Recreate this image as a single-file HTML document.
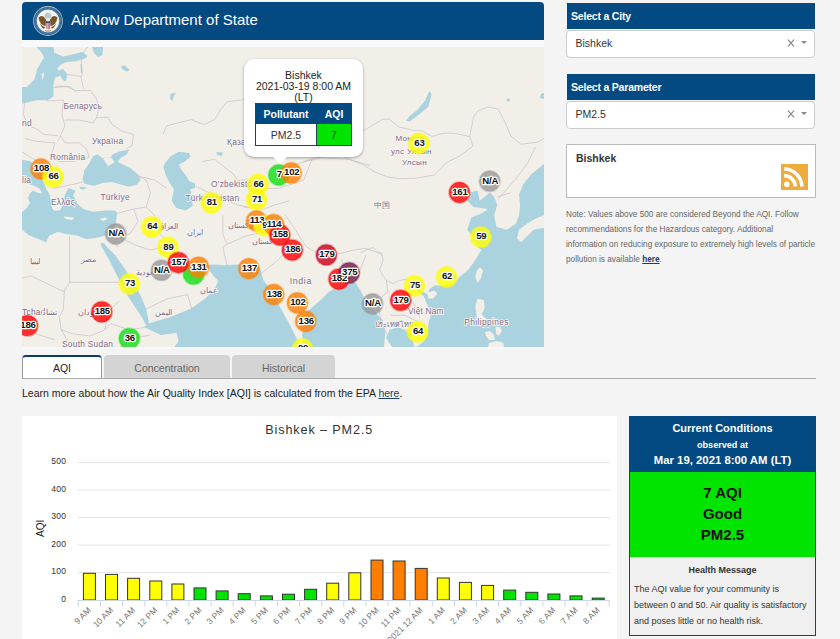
<!DOCTYPE html>
<html><head><meta charset="utf-8">
<style>
*{margin:0;padding:0;box-sizing:border-box}
html,body{width:840px;height:639px;overflow:hidden;background:#f4f4f4;font-family:"Liberation Sans",sans-serif;color:#333;position:relative}
.abs{position:absolute}
#hdr{left:22px;top:2px;width:522px;height:38px;background:#034a83;border-radius:4px 4px 0 0}
#hdr .t{position:absolute;left:49px;top:9px;font-size:15px;color:#fff;white-space:nowrap}
#map{left:22px;top:47px;width:522px;height:300px;background:#f2efe9;overflow:hidden}
.sh{left:567px;width:248px;height:26px;background:#034a83;color:#fff;font-weight:bold;font-size:10.5px;padding:7px 0 0 4px;letter-spacing:-0.2px}
.sel{left:566px;width:249px;height:28px;background:#fff;border:1px solid #ccc;border-radius:4px;font-size:10.5px;padding:6px 0 0 8.5px;color:#333}
.sel .x{position:absolute;left:220px;top:7.5px}
.sel .c{position:absolute;left:233.5px;top:10px;width:0;height:0;border-left:3.3px solid transparent;border-right:3.3px solid transparent;border-top:3.3px solid #888}
#city{left:566px;top:144px;width:250px;height:54px;background:#fff;border:1px solid #bbb}
#city .n{position:absolute;left:9px;top:7px;font-weight:bold;font-size:10.5px;color:#333}
#rss{left:781px;top:164px;width:27px;height:26px;background:#efac3c}
#note{left:566px;top:207.2px;width:270px;white-space:nowrap;font-size:8.25px;line-height:15px;color:#666}
#note a{color:#1a3d6b;font-weight:bold;text-decoration:underline}
.tab{top:355px;height:24px;font-size:10.5px;text-align:center;padding-top:5px;border-radius:4px 4px 0 0}
#t1{left:22px;width:80px;background:#fff;border:1px solid #999;border-top:2px solid #0c3c6a;border-bottom:none;color:#222}
#t2{left:104px;width:126px;background:#d4d4d4;color:#666;padding-top:7px}
#t3{left:232px;width:103px;background:#d4d4d4;color:#666;padding-top:7px}
#tline{left:22px;top:378px;width:794px;height:1px;background:#a8a8a8}
#learn{left:22px;top:387px;font-size:10.5px;color:#222;white-space:nowrap}
#learn a{color:#1a3d6b;text-decoration:underline}
#chart{left:22px;top:416px;width:595px;height:223px;background:#fff}
#cc{left:629px;top:416px;width:187px;height:220px;background:#f0f0f0;border:1px solid #034a83}
#cch{position:absolute;left:0;top:0;width:185px;height:55px;background:#034a83;color:#fff;font-weight:bold;text-align:center}
#ccg{position:absolute;left:0;top:55px;width:185px;height:85px;background:#00e400;color:#111;font-weight:bold;text-align:center;font-size:15px;line-height:21px;padding-top:10px}
#cchm{position:absolute;left:0;top:140px;width:185px;text-align:center;font-weight:bold;font-size:9px;color:#333;padding-top:8px}
#ccb{position:absolute;left:4px;top:164px;width:180px;font-size:9px;line-height:16px;color:#333}

#pop{position:absolute;left:222px;top:12px;width:119px;height:98px;background:#fff;border-radius:10px;box-shadow:0 1px 3px rgba(0,0,0,0.35)}
#pop .pt{position:absolute;left:0;top:11px;width:119px;text-align:center;font-size:10.5px;line-height:11px;color:#222}
#pop table{position:absolute;left:11px;top:44px;width:97px;border-collapse:collapse;font-size:10.5px}
#pop th{background:#034a83;color:#fff;height:20px;font-weight:bold;border:1px solid #034a83}
#pop td{height:22px;text-align:center;border:1px solid #1f3d5c;color:#333}
#pop .c1{width:61px}
#pop .g{background:#00e400}
#pop .tip{position:absolute;left:28.2px;top:97px;width:0;height:0;border-left:8.5px solid transparent;border-right:8.5px solid transparent;border-top:8px solid #fff}
</style></head><body>
<div id="hdr" class="abs">
<svg style="position:absolute;left:11px;top:4px" width="30" height="30" viewBox="0 0 30 30">
<circle cx="15" cy="15" r="14.9" fill="#a9c6c0"/>
<circle cx="15" cy="15" r="14.1" fill="#2c5f96"/>
<circle cx="15" cy="15" r="12.6" fill="none" stroke="#5b86b0" stroke-width="1.6" stroke-dasharray="0.8 0.6"/>
<circle cx="15" cy="15" r="11.4" fill="#cfe0d8"/>
<circle cx="15" cy="15" r="10.8" fill="#f7f6f0"/>
<ellipse cx="15" cy="9.8" rx="3.4" ry="3" fill="#b8c8d2"/>
<path d="M5.5 11.5 Q8 9 10.5 10.5 Q12.5 12 13.5 15 L13.2 20 Q10 20 8 17.5 Q6 15 5.5 11.5Z" fill="#7a5526"/>
<path d="M24.5 11.5 Q22 9 19.5 10.5 Q17.5 12 16.5 15 L16.8 20 Q20 20 22 17.5 Q24 15 24.5 11.5Z" fill="#7a5526"/>
<path d="M7 17 Q9 20.5 12 21 L11 23 Q8 21.5 7 17Z" fill="#5f6a3a"/>
<path d="M23 17 Q21 20.5 18 21 L19 23 Q22 21.5 23 17Z" fill="#8a6a3a"/>
<circle cx="15" cy="13.3" r="1.4" fill="#eee"/>
<path d="M12.7 15.2 H17.3 V20 Q17.3 23 15 24 Q12.7 23 12.7 20Z" fill="#e6e6ea"/>
<rect x="12.7" y="15.2" width="4.6" height="2" fill="#3b4f8a"/>
<rect x="13.4" y="17.2" width="0.8" height="5.5" fill="#c0504d"/>
<rect x="14.8" y="17.2" width="0.8" height="6.3" fill="#c0504d"/>
<rect x="16.2" y="17.2" width="0.8" height="5.5" fill="#c0504d"/>
<path d="M12 24.5 Q15 26 18 24.5" stroke="#9a8a6a" stroke-width="1" fill="none"/>
</svg>
<div class="t">AirNow Department of State</div>
</div>
<div class="abs" style="left:22px;top:40px;width:522px;height:7px;background:#f8f9fa"></div>
<div class="abs" style="left:22px;top:347px;width:522px;height:2px;background:#f7f8fa"></div>
<div id="map" class="abs"><svg width="522" height="300" viewBox="22 47 522 300" style="position:absolute;left:0;top:0">
<rect x="22" y="47" width="522" height="300" fill="#f2efe9"/>
<polygon points="36.3,47.0 53.4,47.0 54.4,52.7 63.0,56.5 75.3,53.7 83.0,51.8 87.7,56.5 83.0,59.4 75.3,61.3 65.8,62.2 60.1,65.1 58.2,70.8 63.0,68.9 67.7,74.6 65.8,81.3 63.0,80.3 60.1,75.6 55.3,77.5 53.4,85.1 53.4,96.5 47.7,100.3 36.3,100.3 27.7,102.2 22.0,104.1 22.0,87.0 26.8,87.0 34.4,79.4 37.2,68.9 43.9,57.5 41.0,51.8" fill="#aad3df"/>
<polygon points="92.0,47.0 103.0,47.0 102.5,55.0 98.0,56.9 94.0,53.0" fill="#aad3df"/>
<polygon points="121.4,66.0 125.0,65.6 129.7,70.0 127.0,71.8 122.0,69.0" fill="#aad3df"/>
<polygon points="80.5,64.0 82.0,64.0 82.5,72.0 81.0,73.0" fill="#aad3df"/>
<polygon points="82.4,180.0 84.3,170.5 89.0,163.8 92.9,156.2 97.6,154.3 102.4,158.1 111.0,157.1 112.9,154.3 119.5,151.4 129.0,149.5 127.1,154.3 120.5,158.1 117.6,161.9 123.3,164.8 131.0,168.6 138.6,175.2 140.5,180.0 136.7,184.8 129.0,186.7 121.4,184.8 111.9,181.9 102.4,182.9 93.8,185.7 84.3,183.8" fill="#aad3df"/>
<polygon points="79.5,187.0 84.0,186.7 87.1,188.0 83.0,189.5 80.0,189.0" fill="#aad3df"/>
<polygon points="164.6,163.5 170.5,156.4 178.7,151.7 189.2,152.9 190.4,156.4 185.7,161.1 178.7,164.6 181.0,169.3 185.7,175.2 189.2,181.1 195.1,183.4 195.1,188.1 190.4,189.3 191.6,196.3 192.8,205.7 185.7,210.4 176.3,208.1 171.6,201.0 174.0,189.3 169.3,182.3 165.8,175.2 163.4,167.0" fill="#aad3df"/>
<polygon points="22.0,160.0 30.0,161.0 36.0,166.0 40.0,172.0 41.8,177.2 46.1,188.4 49.6,194.5 51.0,201.0 52.2,208.3 54.1,210.5 60.1,210.5 62.5,204.5 64.9,195.0 68.5,188.0 75.5,190.8 73.2,195.0 75.6,199.8 78.0,204.5 83.9,209.3 93.4,211.7 105.3,210.5 114.9,210.5 117.2,212.9 116.0,222.4 112.5,230.7 105.3,235.5 95.8,237.9 86.3,239.0 76.8,235.5 67.2,234.3 57.7,231.9 49.4,235.5 45.8,242.6 38.7,239.0 29.1,235.5 22.0,229.5" fill="#aad3df"/>
<polygon points="100.5,243.0 101.7,247.0 109.0,259.4 117.2,276.0 125.5,292.5 133.8,305.0 142.1,317.4 146.2,325.7 149.3,325.7 148.3,319.5 146.2,309.1 142.1,298.8 135.9,286.3 125.5,269.8 115.2,255.3 106.9,247.0 104.0,243.0" fill="#aad3df"/>
<polygon points="206.0,265.5 212.0,264.5 225.0,265.0 240.0,264.5 259.6,266.3 263.6,280.5 271.7,290.6 279.8,306.8 289.9,325.0 298.0,341.2 299.0,347.0 174.5,347.0 178.6,341.2 176.6,333.0 160.4,335.0 148.2,329.0 144.2,327.0 150.2,323.0 170.5,317.0 190.7,308.8 204.9,298.7 215.0,288.6 218.0,281.0 212.0,274.0 208.0,268.0" fill="#aad3df"/>
<polygon points="303.5,347.0 302.0,335.0 304.0,325.0 306.3,311.8 311.8,307.7 321.3,299.5 329.5,291.3 337.7,287.2 347.2,283.2 354.0,281.8 356.8,284.5 360.8,291.3 366.3,300.9 371.7,307.7 377.2,314.5 382.6,320.0 385.4,330.8 384.0,347.0" fill="#aad3df"/>
<polygon points="389.4,330.0 398.8,326.8 411.3,334.6 414.4,347.0 392.0,347.0 386.0,338.0" fill="#aad3df"/>
<polygon points="544.0,164.1 531.5,173.9 523.2,184.3 519.0,194.6 520.1,205.0 519.0,215.3 516.0,223.6 506.6,229.8 496.3,226.7 494.2,215.3 497.3,205.0 494.2,196.7 490.1,192.5 479.7,200.8 477.7,190.5 469.4,192.5 467.3,200.8 473.5,207.0 488.0,209.1 481.8,213.3 471.4,217.4 467.3,229.8 473.5,238.0 477.7,247.0 481.6,250.0 478.4,254.8 473.7,262.6 467.5,270.5 459.6,276.7 453.4,283.0 442.6,286.1 434.8,285.3 430.1,288.5 426.9,294.0 419.1,289.3 415.2,288.5 418.0,292.0 423.8,296.3 426.3,302.5 431.3,312.5 430.0,318.0 428.8,321.3 427.5,335.0 424.0,341.0 418.0,346.0 414.0,347.0 544.0,347.0" fill="#aad3df"/>
<polygon points="429.3,91.0 431.6,94.1 428.5,106.6 419.1,114.4 409.7,121.5 405.8,120.7 409.7,116.0 417.6,109.7 425.4,100.3" fill="#aad3df"/>
<polygon points="506.5,99.0 509.5,98.5 510.0,101.0 507.0,101.5" fill="#aad3df"/>
<polygon points="170.5,94.0 176.0,92.5 174.0,95.5 172.5,101.0 170.0,99.0" fill="#aad3df"/>
<polygon points="541.0,94.0 544.0,93.0 544.0,99.0 540.0,98.0" fill="#aad3df"/>
<polygon points="216.7,152.0 223.0,152.5 222.0,156.0 217.0,155.0" fill="#aad3df"/>
<polygon points="41.5,74.0 43.5,72.5 44.0,76.5 42.0,80.0" fill="#f2efe9"/>
<polygon points="57.0,68.0 61.0,66.0 62.0,68.5 58.0,70.0" fill="#f2efe9"/>
<polygon points="103.3,159.0 106.2,157.1 111.0,157.6 114.8,161.9 108.1,166.2 105.2,161.9" fill="#f2efe9"/>
<polygon points="22.0,183.5 28.0,184.0 34.0,185.5 40.0,189.0 42.0,193.5 38.0,193.0 33.0,190.5 30.0,193.0 28.0,198.0 30.0,203.0 26.0,209.0 22.0,212.0" fill="#f2efe9"/>
<polygon points="63.7,216.4 74.4,217.6 72.0,220.0 64.9,218.8" fill="#f2efe9"/>
<polygon points="99.4,218.8 105.3,217.6 107.7,218.8 103.0,221.2" fill="#f2efe9"/>
<polygon points="426.9,292.4 434.8,290.8 437.1,294.0 433.2,298.6 428.5,298.6" fill="#f2efe9"/>
<polygon points="480.0,267.3 483.1,270.5 480.8,278.3 477.6,283.0 475.3,276.7 476.9,270.5" fill="#f2efe9"/>
<polygon points="519.0,229.8 527.3,223.6 535.6,218.4 544.0,215.3 544.0,227.7 533.6,229.8 527.3,236.0 521.1,242.2 517.0,238.1" fill="#f2efe9"/>
<polygon points="477.6,298.6 483.9,300.2 484.7,308.0 481.6,314.3 487.8,320.6 483.1,322.1 476.9,317.4 475.3,306.5" fill="#f2efe9"/>
<polygon points="495.6,327.0 500.0,326.8 501.9,331.0 499.0,336.0 496.0,334.0" fill="#f2efe9"/>
<polygon points="485.0,332.0 490.0,331.0 494.0,335.0 495.0,340.0 489.0,340.0 486.0,336.0" fill="#f2efe9"/>
<polygon points="489.0,343.0 497.0,341.0 503.5,343.0 504.0,347.0 488.0,347.0" fill="#f2efe9"/>
<polyline points="162.8,134.0 166.9,125.7 183.5,121.5 191.8,119.5 196.0,121.5 204.3,124.6 214.6,119.5 220.8,109.1 227.0,101.9 241.5,99.8 244.0,98.8" fill="none" stroke="#c9bfc9" stroke-width="0.7"/>
<polyline points="363.0,130.0 350.0,140.0 335.0,150.0 320.0,158.0 300.0,163.0 287.0,167.0" fill="none" stroke="#c9bfc9" stroke-width="0.7"/>
<polyline points="344.0,133.0 364.3,130.1 383.1,119.1 389.4,119.1 398.8,127.0 412.9,130.1 422.2,130.9 431.6,136.3 444.0,133.2 453.6,133.2 469.7,136.5 473.0,146.0 460.0,155.8 447.2,162.2 434.3,175.0 415.0,178.3 398.8,178.6 387.8,177.0 375.3,172.3 362.8,164.5 350.3,159.8 344.0,157.0" fill="none" stroke="#c9bfc9" stroke-width="0.7"/>
<polyline points="469.7,136.5 473.5,117.4 477.7,111.2 488.0,107.0 498.4,109.1 506.6,125.7 510.8,136.0 521.1,144.3 537.7,142.2 544.0,138.1" fill="none" stroke="#c9bfc9" stroke-width="0.7"/>
<polyline points="498.4,198.8 514.9,180.0 527.3,163.6 535.6,147.0" fill="none" stroke="#c9bfc9" stroke-width="0.7"/>
<polyline points="497.2,197.0 510.0,193.0" fill="none" stroke="#c9bfc9" stroke-width="0.7"/>
<polyline points="68.0,74.4 81.1,76.6" fill="none" stroke="#c9bfc9" stroke-width="0.7"/>
<polyline points="53.8,87.5 69.1,86.4 76.8,91.9" fill="none" stroke="#c9bfc9" stroke-width="0.7"/>
<polyline points="81.1,76.6 83.3,88.6" fill="none" stroke="#c9bfc9" stroke-width="0.7"/>
<polyline points="81.1,60.1 82.2,74.4 81.1,76.6" fill="none" stroke="#c9bfc9" stroke-width="0.7"/>
<polyline points="87.7,47.0 83.3,52.5" fill="none" stroke="#c9bfc9" stroke-width="0.7"/>
<polyline points="55.1,86.3 65.5,86.3 75.8,90.5 90.3,90.5 96.5,98.8 99.1,108.6 96.3,117.9" fill="none" stroke="#c9bfc9" stroke-width="0.7"/>
<polyline points="47.0,100.7 55.1,100.8 63.4,100.0 62.0,114.3 64.9,125.7 60.6,135.7 57.7,141.4" fill="none" stroke="#c9bfc9" stroke-width="0.7"/>
<polyline points="64.9,120.0 79.1,120.0 93.4,122.9 96.3,117.9 107.7,117.1 112.0,124.3 122.0,131.4 133.4,134.3 132.0,145.7 126.3,148.6" fill="none" stroke="#c9bfc9" stroke-width="0.7"/>
<polyline points="60.6,135.7 64.9,142.9 79.1,142.9 86.3,148.6 89.1,157.1" fill="none" stroke="#c9bfc9" stroke-width="0.7"/>
<polyline points="36.3,128.6 43.4,134.3 57.7,135.7" fill="none" stroke="#c9bfc9" stroke-width="0.7"/>
<polyline points="24.9,138.6 36.3,141.4 54.9,142.9 50.6,157.1" fill="none" stroke="#c9bfc9" stroke-width="0.7"/>
<polyline points="24.9,100.0 23.4,114.3 27.7,125.7 36.3,128.6" fill="none" stroke="#c9bfc9" stroke-width="0.7"/>
<polyline points="50.6,157.1 59.3,161.5 71.7,161.5 84.1,159.4 89.1,157.1" fill="none" stroke="#c9bfc9" stroke-width="0.7"/>
<polyline points="53.1,188.4 73.8,184.3 82.0,182.2" fill="none" stroke="#c9bfc9" stroke-width="0.7"/>
<polyline points="22.0,152.0 35.0,160.0 40.0,168.0" fill="none" stroke="#c9bfc9" stroke-width="0.7"/>
<polyline points="117.2,213.3 133.8,209.1 146.2,207.0 150.4,192.5 146.2,180.0 138.0,176.0" fill="none" stroke="#c9bfc9" stroke-width="0.7"/>
<polyline points="138.0,176.0 154.5,180.0 167.0,188.4" fill="none" stroke="#c9bfc9" stroke-width="0.7"/>
<polyline points="146.2,207.0 154.5,215.3 156.6,229.8 167.0,242.2 172.0,249.0" fill="none" stroke="#c9bfc9" stroke-width="0.7"/>
<polyline points="133.8,209.1 138.0,221.5 129.7,234.0 117.2,236.0" fill="none" stroke="#c9bfc9" stroke-width="0.7"/>
<polyline points="117.2,236.0 135.0,245.0 150.0,250.0 165.0,247.0" fill="none" stroke="#c9bfc9" stroke-width="0.7"/>
<polyline points="112.0,240.0 118.0,247.0" fill="none" stroke="#c9bfc9" stroke-width="0.7"/>
<polyline points="69.6,236.0 69.6,282.2 119.3,282.2" fill="none" stroke="#c9bfc9" stroke-width="0.7"/>
<polyline points="22.0,278.0 31.3,276.0 63.4,291.5 69.6,282.2" fill="none" stroke="#c9bfc9" stroke-width="0.7"/>
<polyline points="64.4,290.5 63.4,309.1 59.3,317.4 61.3,329.8 69.6,344.3" fill="none" stroke="#c9bfc9" stroke-width="0.7"/>
<polyline points="61.3,329.8 73.8,334.0 90.3,336.0 104.8,329.8 111.0,323.6" fill="none" stroke="#c9bfc9" stroke-width="0.7"/>
<polyline points="119.3,300.8 109.0,311.2 104.8,329.8" fill="none" stroke="#c9bfc9" stroke-width="0.7"/>
<polyline points="146.2,309.0 167.0,298.8 187.6,294.6 191.8,309.0" fill="none" stroke="#c9bfc9" stroke-width="0.7"/>
<polyline points="22.0,330.0 40.0,335.0 55.0,340.0" fill="none" stroke="#c9bfc9" stroke-width="0.7"/>
<polyline points="111.0,323.6 130.0,330.0 146.0,327.0" fill="none" stroke="#c9bfc9" stroke-width="0.7"/>
<polyline points="120.0,347.0 135.0,338.0 150.0,335.0" fill="none" stroke="#c9bfc9" stroke-width="0.7"/>
<polyline points="202.2,161.5 214.6,159.4 233.3,174.0 237.4,180.0 247.8,180.0 258.0,185.0" fill="none" stroke="#c9bfc9" stroke-width="0.7"/>
<polyline points="196.0,186.3 208.4,192.5 222.9,198.8 237.4,205.0 247.8,207.0" fill="none" stroke="#c9bfc9" stroke-width="0.7"/>
<polyline points="264.3,188.4 278.8,188.4 303.7,180.0 312.0,159.4" fill="none" stroke="#c9bfc9" stroke-width="0.7"/>
<polyline points="303.7,161.5 316.0,157.4 349.2,159.4 370.0,165.6" fill="none" stroke="#c9bfc9" stroke-width="0.7"/>
<polyline points="243.6,207.0 264.3,209.1 274.7,205.0 289.2,200.8" fill="none" stroke="#c9bfc9" stroke-width="0.7"/>
<polyline points="222.9,215.3 222.9,234.0 227.0,244.3 222.9,247.0 227.0,265.6" fill="none" stroke="#c9bfc9" stroke-width="0.7"/>
<polyline points="278.8,215.3 264.3,231.9 245.7,236.0 227.0,244.3" fill="none" stroke="#c9bfc9" stroke-width="0.7"/>
<polyline points="283.0,234.0 289.2,246.4 289.2,247.0 278.8,259.4 258.1,276.0" fill="none" stroke="#c9bfc9" stroke-width="0.7"/>
<polyline points="284.6,214.3 293.6,226.8 299.0,235.7 306.0,246.4 315.0,251.8 329.3,251.8 340.0,253.6 347.0,251.8 354.3,250.0 365.0,248.2 375.7,251.8 382.9,255.4" fill="none" stroke="#c9bfc9" stroke-width="0.7"/>
<polyline points="341.8,259.0 343.6,267.9 340.0,275.0" fill="none" stroke="#c9bfc9" stroke-width="0.7"/>
<polyline points="340.9,267.7 347.1,288.4" fill="none" stroke="#c9bfc9" stroke-width="0.7"/>
<polyline points="360.0,253.0 366.6,249.7 373.1,247.5 377.5,251.9 381.9,253.0 383.0,260.7 379.7,269.4 381.9,273.8 386.3,280.4 392.9,283.7 399.4,280.4 406.0,279.3 410.4,281.5 416.0,288.0" fill="none" stroke="#c9bfc9" stroke-width="0.7"/>
<polyline points="366.0,255.0 362.0,265.0 357.0,278.0" fill="none" stroke="#c9bfc9" stroke-width="0.7"/>
<polyline points="405.2,292.5 417.6,309.1 419.7,317.4" fill="none" stroke="#c9bfc9" stroke-width="0.7"/>
<polyline points="390.7,315.3 405.2,315.3 417.6,321.5 415.5,331.9 403.1,329.8" fill="none" stroke="#c9bfc9" stroke-width="0.7"/>
<polyline points="386.3,280.4 388.0,292.0 382.4,296.0 378.3,309.1 382.4,325.7 386.6,334.0" fill="none" stroke="#c9bfc9" stroke-width="0.7"/>
<text x="63.4" y="109" font-size="8.3" fill="#7d6a8a" stroke="#f8f6f2" stroke-width="1.6" paint-order="stroke" font-family="Liberation Sans" letter-spacing="0.3">Беларусь</text>
<text x="92" y="143.5" font-size="8.3" fill="#7d6a8a" stroke="#f8f6f2" stroke-width="1.6" paint-order="stroke" font-family="Liberation Sans" letter-spacing="0.3">Україна</text>
<text x="50" y="159.5" font-size="8.3" fill="#7d6a8a" stroke="#f8f6f2" stroke-width="1.6" paint-order="stroke" font-family="Liberation Sans" letter-spacing="0.3">România</text>
<text x="22" y="125.5" font-size="8.3" fill="#7d6a8a" stroke="#f8f6f2" stroke-width="1.6" paint-order="stroke" font-family="Liberation Sans" letter-spacing="0.3">nd</text>
<text x="22" y="183" font-size="8.3" fill="#7d6a8a" stroke="#f8f6f2" stroke-width="1.6" paint-order="stroke" font-family="Liberation Sans" letter-spacing="0.3">lia</text>
<text x="100.5" y="199.5" font-size="8.3" fill="#7d6a8a" stroke="#f8f6f2" stroke-width="1.6" paint-order="stroke" font-family="Liberation Sans" letter-spacing="0.3">Türkiye</text>
<text x="51" y="204.5" font-size="8.3" fill="#7d6a8a" stroke="#f8f6f2" stroke-width="1.6" paint-order="stroke" font-family="Liberation Sans" letter-spacing="0.3">Ελλάς</text>
<text x="227" y="144.5" font-size="8.3" fill="#7d6a8a" stroke="#f8f6f2" stroke-width="1.6" paint-order="stroke" font-family="Liberation Sans" letter-spacing="0.3">Қаза</text>
<text x="211" y="186.5" font-size="8.3" fill="#7d6a8a" stroke="#f8f6f2" stroke-width="1.6" paint-order="stroke" font-family="Liberation Sans" letter-spacing="0.3">O'zbekiston</text>
<text x="185.5" y="201" font-size="8.3" fill="#7d6a8a" stroke="#f8f6f2" stroke-width="1.6" paint-order="stroke" font-family="Liberation Sans" letter-spacing="0.3">Türkmenistan</text>
<text x="289.8" y="283.6" font-size="8.8" fill="#7d6a8a" stroke="#f8f6f2" stroke-width="1.6" paint-order="stroke" font-family="Liberation Sans" letter-spacing="0.6">India</text>
<text x="374" y="207.5" font-size="8.3" fill="#7d6a8a" stroke="#f8f6f2" stroke-width="1.6" paint-order="stroke" font-family="Liberation Sans" letter-spacing="0.3">中国</text>
<text x="395.5" y="141" font-size="8" fill="#7d6a8a" stroke="#f8f6f2" stroke-width="1.6" paint-order="stroke" font-family="Liberation Sans" letter-spacing="0.3">Монгол</text>
<text x="391" y="153.5" font-size="8" fill="#7d6a8a" stroke="#f8f6f2" stroke-width="1.6" paint-order="stroke" font-family="Liberation Sans" letter-spacing="0.3">улс Улсын</text>
<text x="402" y="165" font-size="8" fill="#7d6a8a" stroke="#f8f6f2" stroke-width="1.6" paint-order="stroke" font-family="Liberation Sans" letter-spacing="0.3">Улсын</text>
<text x="408" y="314" font-size="8.3" fill="#7d6a8a" stroke="#f8f6f2" stroke-width="1.6" paint-order="stroke" font-family="Liberation Sans" letter-spacing="0.2">Việt Nam</text>
<text x="374.5" y="326.5" font-size="7.4" fill="#7d6a8a" stroke="#f8f6f2" stroke-width="1.6" paint-order="stroke" font-family="Liberation Sans" letter-spacing="-0.1">ประเทศไทย</text>
<text x="464.3" y="324.8" font-size="8.3" fill="#7d6a8a" stroke="#f8f6f2" stroke-width="1.6" paint-order="stroke" font-family="Liberation Sans" letter-spacing="0.4">Philippines</text>
<text x="62" y="347" font-size="8.3" fill="#7d6a8a" stroke="#f8f6f2" stroke-width="1.6" paint-order="stroke" font-family="Liberation Sans" letter-spacing="0.3">South Sudan</text>
<text x="22" y="315" font-size="8.3" fill="#7d6a8a" stroke="#f8f6f2" stroke-width="1.6" paint-order="stroke" font-family="Liberation Sans" letter-spacing="0.3">Tchad</text>
<text x="187" y="235" font-size="8" fill="#7d6a8a" stroke="#f8f6f2" stroke-width="1.6" paint-order="stroke" font-family="Liberation Sans" letter-spacing="0">ایران</text>
<text x="158" y="228.6" font-size="8" fill="#7d6a8a" stroke="#f8f6f2" stroke-width="1.6" paint-order="stroke" font-family="Liberation Sans" letter-spacing="0">العراق</text>
<text x="81" y="262" font-size="8" fill="#7d6a8a" stroke="#f8f6f2" stroke-width="1.6" paint-order="stroke" font-family="Liberation Sans" letter-spacing="0">مصر</text>
<text x="29.6" y="264" font-size="8" fill="#7d6a8a" stroke="#f8f6f2" stroke-width="1.6" paint-order="stroke" font-family="Liberation Sans" letter-spacing="0">ليبيا</text>
<text x="135.8" y="275.2" font-size="8" fill="#7d6a8a" stroke="#f8f6f2" stroke-width="1.6" paint-order="stroke" font-family="Liberation Sans" letter-spacing="0">السعودية</text>
<text x="200" y="293" font-size="8" fill="#7d6a8a" stroke="#f8f6f2" stroke-width="1.6" paint-order="stroke" font-family="Liberation Sans" letter-spacing="0">عمان</text>
<text x="155" y="315.4" font-size="8" fill="#7d6a8a" stroke="#f8f6f2" stroke-width="1.6" paint-order="stroke" font-family="Liberation Sans" letter-spacing="0">اليمن</text>
<text x="42" y="315.4" font-size="8" fill="#7d6a8a" stroke="#f8f6f2" stroke-width="1.6" paint-order="stroke" font-family="Liberation Sans" letter-spacing="0">تشاد</text>
<text x="78" y="315.4" font-size="8" fill="#7d6a8a" stroke="#f8f6f2" stroke-width="1.6" paint-order="stroke" font-family="Liberation Sans" letter-spacing="0">السودان</text>
<text x="228" y="227.7" font-size="8" fill="#7d6a8a" stroke="#f8f6f2" stroke-width="1.6" paint-order="stroke" font-family="Liberation Sans" letter-spacing="0">پاکستان</text>
<text x="252" y="244" font-size="8" fill="#7d6a8a" stroke="#f8f6f2" stroke-width="1.6" paint-order="stroke" font-family="Liberation Sans" letter-spacing="0">کستان</text>
<circle cx="41" cy="169" r="10.4" fill="#ff7e00" fill-opacity="0.8" stroke="#ff7e00" stroke-opacity="0.3" stroke-width="1.8"/>
<circle cx="53" cy="176.8" r="10.4" fill="#ffff00" fill-opacity="0.8" stroke="#ffff00" stroke-opacity="0.3" stroke-width="1.8"/>
<circle cx="115.8" cy="234" r="10.4" fill="#999999" fill-opacity="0.8" stroke="#999999" stroke-opacity="0.3" stroke-width="1.8"/>
<circle cx="151.8" cy="227" r="10.4" fill="#ffff00" fill-opacity="0.8" stroke="#ffff00" stroke-opacity="0.3" stroke-width="1.8"/>
<circle cx="167.9" cy="247.2" r="10.4" fill="#ffff00" fill-opacity="0.8" stroke="#ffff00" stroke-opacity="0.3" stroke-width="1.8"/>
<circle cx="193.6" cy="274.2" r="10.4" fill="#11dd11" fill-opacity="0.8" stroke="#11dd11" stroke-opacity="0.3" stroke-width="1.8"/>
<circle cx="198.5" cy="267.2" r="10.4" fill="#ff7e00" fill-opacity="0.8" stroke="#ff7e00" stroke-opacity="0.3" stroke-width="1.8"/>
<circle cx="161.4" cy="270.3" r="10.4" fill="#999999" fill-opacity="0.8" stroke="#999999" stroke-opacity="0.3" stroke-width="1.8"/>
<circle cx="178.4" cy="262.6" r="10.4" fill="#ff0000" fill-opacity="0.8" stroke="#ff0000" stroke-opacity="0.3" stroke-width="1.8"/>
<circle cx="129.5" cy="284" r="10.4" fill="#ffff00" fill-opacity="0.8" stroke="#ffff00" stroke-opacity="0.3" stroke-width="1.8"/>
<circle cx="101.8" cy="311.8" r="10.4" fill="#ff0000" fill-opacity="0.8" stroke="#ff0000" stroke-opacity="0.3" stroke-width="1.8"/>
<circle cx="27.5" cy="325.7" r="10.4" fill="#ff0000" fill-opacity="0.8" stroke="#ff0000" stroke-opacity="0.3" stroke-width="1.8"/>
<circle cx="129.3" cy="338.6" r="10.4" fill="#11dd11" fill-opacity="0.8" stroke="#11dd11" stroke-opacity="0.3" stroke-width="1.8"/>
<circle cx="211.3" cy="202.9" r="10.4" fill="#ffff00" fill-opacity="0.8" stroke="#ffff00" stroke-opacity="0.3" stroke-width="1.8"/>
<circle cx="256.5" cy="199.8" r="10.4" fill="#ffff00" fill-opacity="0.8" stroke="#ffff00" stroke-opacity="0.3" stroke-width="1.8"/>
<circle cx="258.1" cy="184.3" r="10.4" fill="#ffff00" fill-opacity="0.8" stroke="#ffff00" stroke-opacity="0.3" stroke-width="1.8"/>
<circle cx="278.8" cy="175" r="10.4" fill="#11dd11" fill-opacity="0.8" stroke="#11dd11" stroke-opacity="0.3" stroke-width="1.8"/>
<circle cx="291.2" cy="172.9" r="10.4" fill="#ff7e00" fill-opacity="0.8" stroke="#ff7e00" stroke-opacity="0.3" stroke-width="1.8"/>
<circle cx="256.5" cy="221" r="10.4" fill="#ff7e00" fill-opacity="0.8" stroke="#ff7e00" stroke-opacity="0.3" stroke-width="1.8"/>
<circle cx="264.3" cy="225.7" r="10.4" fill="#ffff00" fill-opacity="0.8" stroke="#ffff00" stroke-opacity="0.3" stroke-width="1.8"/>
<circle cx="273.6" cy="224.6" r="10.4" fill="#ff7e00" fill-opacity="0.8" stroke="#ff7e00" stroke-opacity="0.3" stroke-width="1.8"/>
<circle cx="279.8" cy="235" r="10.4" fill="#ff0000" fill-opacity="0.8" stroke="#ff0000" stroke-opacity="0.3" stroke-width="1.8"/>
<circle cx="292.3" cy="250.1" r="10.4" fill="#ff0000" fill-opacity="0.8" stroke="#ff0000" stroke-opacity="0.3" stroke-width="1.8"/>
<circle cx="326.4" cy="254.9" r="10.4" fill="#c8001a" fill-opacity="0.8" stroke="#c8001a" stroke-opacity="0.3" stroke-width="1.8"/>
<circle cx="338.9" cy="279.1" r="10.4" fill="#ff0000" fill-opacity="0.8" stroke="#ff0000" stroke-opacity="0.3" stroke-width="1.8"/>
<circle cx="349.2" cy="272.9" r="10.4" fill="#6e1a48" fill-opacity="0.8" stroke="#6e1a48" stroke-opacity="0.3" stroke-width="1.8"/>
<circle cx="248.9" cy="268.7" r="10.4" fill="#ff7e00" fill-opacity="0.8" stroke="#ff7e00" stroke-opacity="0.3" stroke-width="1.8"/>
<circle cx="273.8" cy="294.5" r="10.4" fill="#ff7e00" fill-opacity="0.8" stroke="#ff7e00" stroke-opacity="0.3" stroke-width="1.8"/>
<circle cx="297.4" cy="302.9" r="10.4" fill="#ff7e00" fill-opacity="0.8" stroke="#ff7e00" stroke-opacity="0.3" stroke-width="1.8"/>
<circle cx="305.7" cy="321.5" r="10.4" fill="#ff7e00" fill-opacity="0.8" stroke="#ff7e00" stroke-opacity="0.3" stroke-width="1.8"/>
<circle cx="302.5" cy="349" r="10.4" fill="#ffff00" fill-opacity="0.8" stroke="#ffff00" stroke-opacity="0.3" stroke-width="1.8"/>
<circle cx="372.5" cy="304" r="10.4" fill="#999999" fill-opacity="0.8" stroke="#999999" stroke-opacity="0.3" stroke-width="1.8"/>
<circle cx="414.5" cy="285.9" r="10.4" fill="#ffff00" fill-opacity="0.8" stroke="#ffff00" stroke-opacity="0.3" stroke-width="1.8"/>
<circle cx="400.6" cy="300.4" r="10.4" fill="#ff0000" fill-opacity="0.8" stroke="#ff0000" stroke-opacity="0.3" stroke-width="1.8"/>
<circle cx="446.6" cy="277" r="10.4" fill="#ffff00" fill-opacity="0.8" stroke="#ffff00" stroke-opacity="0.3" stroke-width="1.8"/>
<circle cx="417.6" cy="331.9" r="10.4" fill="#ffff00" fill-opacity="0.8" stroke="#ffff00" stroke-opacity="0.3" stroke-width="1.8"/>
<circle cx="459.4" cy="192.5" r="10.4" fill="#ff0000" fill-opacity="0.8" stroke="#ff0000" stroke-opacity="0.3" stroke-width="1.8"/>
<circle cx="489.7" cy="181.2" r="10.4" fill="#999999" fill-opacity="0.8" stroke="#999999" stroke-opacity="0.3" stroke-width="1.8"/>
<circle cx="480.8" cy="237.1" r="10.4" fill="#ffff00" fill-opacity="0.8" stroke="#ffff00" stroke-opacity="0.3" stroke-width="1.8"/>
<circle cx="418.9" cy="143.5" r="10.4" fill="#ffff00" fill-opacity="0.8" stroke="#ffff00" stroke-opacity="0.3" stroke-width="1.8"/>
<text x="41.5" y="171.3" text-anchor="middle" font-size="9.6" font-weight="bold" fill="#111" stroke="#fff" stroke-width="2.6" letter-spacing="-0.25" paint-order="stroke" stroke-linejoin="round" font-family="Liberation Sans">108</text>
<text x="53.5" y="179.10000000000002" text-anchor="middle" font-size="9.6" font-weight="bold" fill="#111" stroke="#fff" stroke-width="2.6" letter-spacing="-0.25" paint-order="stroke" stroke-linejoin="round" font-family="Liberation Sans">66</text>
<text x="116.3" y="236.3" text-anchor="middle" font-size="9.6" font-weight="bold" fill="#111" stroke="#fff" stroke-width="2.6" letter-spacing="-0.25" paint-order="stroke" stroke-linejoin="round" font-family="Liberation Sans">N/A</text>
<text x="152.3" y="229.3" text-anchor="middle" font-size="9.6" font-weight="bold" fill="#111" stroke="#fff" stroke-width="2.6" letter-spacing="-0.25" paint-order="stroke" stroke-linejoin="round" font-family="Liberation Sans">64</text>
<text x="168.4" y="249.5" text-anchor="middle" font-size="9.6" font-weight="bold" fill="#111" stroke="#fff" stroke-width="2.6" letter-spacing="-0.25" paint-order="stroke" stroke-linejoin="round" font-family="Liberation Sans">89</text>
<text x="199.0" y="269.5" text-anchor="middle" font-size="9.6" font-weight="bold" fill="#111" stroke="#fff" stroke-width="2.6" letter-spacing="-0.25" paint-order="stroke" stroke-linejoin="round" font-family="Liberation Sans">131</text>
<text x="161.9" y="272.6" text-anchor="middle" font-size="9.6" font-weight="bold" fill="#111" stroke="#fff" stroke-width="2.6" letter-spacing="-0.25" paint-order="stroke" stroke-linejoin="round" font-family="Liberation Sans">N/A</text>
<text x="178.9" y="264.90000000000003" text-anchor="middle" font-size="9.6" font-weight="bold" fill="#111" stroke="#fff" stroke-width="2.6" letter-spacing="-0.25" paint-order="stroke" stroke-linejoin="round" font-family="Liberation Sans">157</text>
<text x="130.0" y="286.3" text-anchor="middle" font-size="9.6" font-weight="bold" fill="#111" stroke="#fff" stroke-width="2.6" letter-spacing="-0.25" paint-order="stroke" stroke-linejoin="round" font-family="Liberation Sans">73</text>
<text x="102.3" y="314.1" text-anchor="middle" font-size="9.6" font-weight="bold" fill="#111" stroke="#fff" stroke-width="2.6" letter-spacing="-0.25" paint-order="stroke" stroke-linejoin="round" font-family="Liberation Sans">185</text>
<text x="28.0" y="328.0" text-anchor="middle" font-size="9.6" font-weight="bold" fill="#111" stroke="#fff" stroke-width="2.6" letter-spacing="-0.25" paint-order="stroke" stroke-linejoin="round" font-family="Liberation Sans">186</text>
<text x="129.8" y="340.90000000000003" text-anchor="middle" font-size="9.6" font-weight="bold" fill="#111" stroke="#fff" stroke-width="2.6" letter-spacing="-0.25" paint-order="stroke" stroke-linejoin="round" font-family="Liberation Sans">36</text>
<text x="211.8" y="205.20000000000002" text-anchor="middle" font-size="9.6" font-weight="bold" fill="#111" stroke="#fff" stroke-width="2.6" letter-spacing="-0.25" paint-order="stroke" stroke-linejoin="round" font-family="Liberation Sans">81</text>
<text x="257.0" y="202.10000000000002" text-anchor="middle" font-size="9.6" font-weight="bold" fill="#111" stroke="#fff" stroke-width="2.6" letter-spacing="-0.25" paint-order="stroke" stroke-linejoin="round" font-family="Liberation Sans">71</text>
<text x="258.6" y="186.60000000000002" text-anchor="middle" font-size="9.6" font-weight="bold" fill="#111" stroke="#fff" stroke-width="2.6" letter-spacing="-0.25" paint-order="stroke" stroke-linejoin="round" font-family="Liberation Sans">66</text>
<text x="279.3" y="177.3" text-anchor="middle" font-size="9.6" font-weight="bold" fill="#111" stroke="#fff" stroke-width="2.6" letter-spacing="-0.25" paint-order="stroke" stroke-linejoin="round" font-family="Liberation Sans">7</text>
<text x="291.7" y="175.20000000000002" text-anchor="middle" font-size="9.6" font-weight="bold" fill="#111" stroke="#fff" stroke-width="2.6" letter-spacing="-0.25" paint-order="stroke" stroke-linejoin="round" font-family="Liberation Sans">102</text>
<text x="257.0" y="223.3" text-anchor="middle" font-size="9.6" font-weight="bold" fill="#111" stroke="#fff" stroke-width="2.6" letter-spacing="-0.25" paint-order="stroke" stroke-linejoin="round" font-family="Liberation Sans">113</text>
<text x="264.8" y="228.0" text-anchor="middle" font-size="9.6" font-weight="bold" fill="#111" stroke="#fff" stroke-width="2.6" letter-spacing="-0.25" paint-order="stroke" stroke-linejoin="round" font-family="Liberation Sans">9</text>
<text x="274.1" y="226.9" text-anchor="middle" font-size="9.6" font-weight="bold" fill="#111" stroke="#fff" stroke-width="2.6" letter-spacing="-0.25" paint-order="stroke" stroke-linejoin="round" font-family="Liberation Sans">114</text>
<text x="280.3" y="237.3" text-anchor="middle" font-size="9.6" font-weight="bold" fill="#111" stroke="#fff" stroke-width="2.6" letter-spacing="-0.25" paint-order="stroke" stroke-linejoin="round" font-family="Liberation Sans">158</text>
<text x="292.8" y="252.4" text-anchor="middle" font-size="9.6" font-weight="bold" fill="#111" stroke="#fff" stroke-width="2.6" letter-spacing="-0.25" paint-order="stroke" stroke-linejoin="round" font-family="Liberation Sans">186</text>
<text x="326.9" y="257.2" text-anchor="middle" font-size="9.6" font-weight="bold" fill="#111" stroke="#fff" stroke-width="2.6" letter-spacing="-0.25" paint-order="stroke" stroke-linejoin="round" font-family="Liberation Sans">179</text>
<text x="339.4" y="281.40000000000003" text-anchor="middle" font-size="9.6" font-weight="bold" fill="#111" stroke="#fff" stroke-width="2.6" letter-spacing="-0.25" paint-order="stroke" stroke-linejoin="round" font-family="Liberation Sans">182</text>
<text x="349.7" y="275.2" text-anchor="middle" font-size="9.6" font-weight="bold" fill="#111" stroke="#fff" stroke-width="2.6" letter-spacing="-0.25" paint-order="stroke" stroke-linejoin="round" font-family="Liberation Sans">375</text>
<text x="249.4" y="271.0" text-anchor="middle" font-size="9.6" font-weight="bold" fill="#111" stroke="#fff" stroke-width="2.6" letter-spacing="-0.25" paint-order="stroke" stroke-linejoin="round" font-family="Liberation Sans">137</text>
<text x="274.3" y="296.8" text-anchor="middle" font-size="9.6" font-weight="bold" fill="#111" stroke="#fff" stroke-width="2.6" letter-spacing="-0.25" paint-order="stroke" stroke-linejoin="round" font-family="Liberation Sans">138</text>
<text x="297.9" y="305.2" text-anchor="middle" font-size="9.6" font-weight="bold" fill="#111" stroke="#fff" stroke-width="2.6" letter-spacing="-0.25" paint-order="stroke" stroke-linejoin="round" font-family="Liberation Sans">102</text>
<text x="306.2" y="323.8" text-anchor="middle" font-size="9.6" font-weight="bold" fill="#111" stroke="#fff" stroke-width="2.6" letter-spacing="-0.25" paint-order="stroke" stroke-linejoin="round" font-family="Liberation Sans">136</text>
<text x="303.0" y="351.3" text-anchor="middle" font-size="9.6" font-weight="bold" fill="#111" stroke="#fff" stroke-width="2.6" letter-spacing="-0.25" paint-order="stroke" stroke-linejoin="round" font-family="Liberation Sans">99</text>
<text x="373.0" y="306.3" text-anchor="middle" font-size="9.6" font-weight="bold" fill="#111" stroke="#fff" stroke-width="2.6" letter-spacing="-0.25" paint-order="stroke" stroke-linejoin="round" font-family="Liberation Sans">N/A</text>
<text x="415.0" y="288.2" text-anchor="middle" font-size="9.6" font-weight="bold" fill="#111" stroke="#fff" stroke-width="2.6" letter-spacing="-0.25" paint-order="stroke" stroke-linejoin="round" font-family="Liberation Sans">75</text>
<text x="401.1" y="302.7" text-anchor="middle" font-size="9.6" font-weight="bold" fill="#111" stroke="#fff" stroke-width="2.6" letter-spacing="-0.25" paint-order="stroke" stroke-linejoin="round" font-family="Liberation Sans">179</text>
<text x="447.1" y="279.3" text-anchor="middle" font-size="9.6" font-weight="bold" fill="#111" stroke="#fff" stroke-width="2.6" letter-spacing="-0.25" paint-order="stroke" stroke-linejoin="round" font-family="Liberation Sans">62</text>
<text x="418.1" y="334.2" text-anchor="middle" font-size="9.6" font-weight="bold" fill="#111" stroke="#fff" stroke-width="2.6" letter-spacing="-0.25" paint-order="stroke" stroke-linejoin="round" font-family="Liberation Sans">64</text>
<text x="459.9" y="194.8" text-anchor="middle" font-size="9.6" font-weight="bold" fill="#111" stroke="#fff" stroke-width="2.6" letter-spacing="-0.25" paint-order="stroke" stroke-linejoin="round" font-family="Liberation Sans">161</text>
<text x="490.2" y="183.5" text-anchor="middle" font-size="9.6" font-weight="bold" fill="#111" stroke="#fff" stroke-width="2.6" letter-spacing="-0.25" paint-order="stroke" stroke-linejoin="round" font-family="Liberation Sans">N/A</text>
<text x="481.3" y="239.4" text-anchor="middle" font-size="9.6" font-weight="bold" fill="#111" stroke="#fff" stroke-width="2.6" letter-spacing="-0.25" paint-order="stroke" stroke-linejoin="round" font-family="Liberation Sans">59</text>
<text x="419.4" y="145.8" text-anchor="middle" font-size="9.6" font-weight="bold" fill="#111" stroke="#fff" stroke-width="2.6" letter-spacing="-0.25" paint-order="stroke" stroke-linejoin="round" font-family="Liberation Sans">63</text>
</svg>
<div id="pop"><div class="pt">Bishkek<br>2021-03-19 8:00 AM<br>(LT)</div><table><tr><th class="c1">Pollutant</th><th class="c2">AQI</th></tr><tr><td class="c1">PM2.5</td><td class="c2 g">7</td></tr></table><div class="tip"></div></div></div>

<div class="abs sh" style="top:3px">Select a City</div>
<div class="abs sel" style="top:30px">Bishkek<svg class="x" width="8" height="8" viewBox="0 0 8 8"><path d="M1 0.6 L7 7.4 M7 0.6 L1 7.4" stroke="#8a8a8a" stroke-width="1.25"/></svg><span class="c"></span></div>
<div class="abs sh" style="top:74px">Select a Parameter</div>
<div class="abs sel" style="top:101px">PM2.5<svg class="x" width="8" height="8" viewBox="0 0 8 8"><path d="M1 0.6 L7 7.4 M7 0.6 L1 7.4" stroke="#8a8a8a" stroke-width="1.25"/></svg><span class="c"></span></div>
<div id="city" class="abs"><div class="n">Bishkek</div></div>
<div id="rss" class="abs"><svg width="27" height="26" viewBox="0 0 27 26"><circle cx="5.8" cy="20.3" r="2.8" fill="#fff"/><path d="M3.2 11.6 A11 11 0 0 1 14.2 22.6" stroke="#fff" stroke-width="3.6" fill="none"/><path d="M3.2 5 A17.6 17.6 0 0 1 20.8 22.6" stroke="#fff" stroke-width="3.6" fill="none"/></svg></div>
<div id="note" class="abs">Note: Values above 500 are considered Beyond the AQI. Follow<br>recommendations for the Hazardous category. Additional<br>information on reducing exposure to extremely high levels of particle<br>pollution is available <a>here</a>.</div>

<div id="t1" class="abs tab">AQI</div>
<div id="t2" class="abs tab">Concentration</div>
<div id="t3" class="abs tab">Historical</div>
<div id="tline" class="abs"></div>
<div id="learn" class="abs">Learn more about how the Air Quality Index [AQI] is calculated from the EPA <a>here</a>.</div>

<div id="chart" class="abs"><svg width="595" height="223" viewBox="22 416 595 223" style="position:absolute;left:0;top:0" font-family="Liberation Sans">
<text x="319.2" y="433.5" text-anchor="middle" font-size="12.6" fill="#333" letter-spacing="0.9">Bishkek – PM2.5</text>
<text x="66.4" y="601.5" text-anchor="end" font-size="8.6" fill="#333" letter-spacing="0.3">0</text>
<line x1="77.5" y1="572.5" x2="610.0" y2="572.5" stroke="#e6e6e6" stroke-width="1"/>
<text x="66.4" y="574.0" text-anchor="end" font-size="8.6" fill="#333" letter-spacing="0.3">100</text>
<line x1="77.5" y1="545.0" x2="610.0" y2="545.0" stroke="#e6e6e6" stroke-width="1"/>
<text x="66.4" y="546.5" text-anchor="end" font-size="8.6" fill="#333" letter-spacing="0.3">200</text>
<line x1="77.5" y1="517.5" x2="610.0" y2="517.5" stroke="#e6e6e6" stroke-width="1"/>
<text x="66.4" y="519.0" text-anchor="end" font-size="8.6" fill="#333" letter-spacing="0.3">300</text>
<line x1="77.5" y1="490.0" x2="610.0" y2="490.0" stroke="#e6e6e6" stroke-width="1"/>
<text x="66.4" y="491.5" text-anchor="end" font-size="8.6" fill="#333" letter-spacing="0.3">400</text>
<line x1="77.5" y1="462.5" x2="610.0" y2="462.5" stroke="#e6e6e6" stroke-width="1"/>
<text x="66.4" y="464.0" text-anchor="end" font-size="8.6" fill="#333" letter-spacing="0.3">500</text>
<text transform="translate(44,528.4) rotate(-90)" text-anchor="middle" font-size="10" fill="#222">AQI</text>
<rect x="83.4" y="573.3" width="12" height="26.7" fill="#ffff00" stroke="#333" stroke-width="1"/>
<text transform="translate(91.6,610.8) rotate(-45)" text-anchor="end" font-size="8.6" fill="#777" letter-spacing="0">9 AM</text>
<rect x="105.5" y="574.4" width="12" height="25.6" fill="#ffff00" stroke="#333" stroke-width="1"/>
<text transform="translate(113.7,610.8) rotate(-45)" text-anchor="end" font-size="8.6" fill="#777" letter-spacing="0">10 AM</text>
<rect x="127.6" y="578.3" width="12" height="21.7" fill="#ffff00" stroke="#333" stroke-width="1"/>
<text transform="translate(135.8,610.8) rotate(-45)" text-anchor="end" font-size="8.6" fill="#777" letter-spacing="0">11 AM</text>
<rect x="149.8" y="581.0" width="12" height="19.0" fill="#ffff00" stroke="#333" stroke-width="1"/>
<text transform="translate(158.0,610.8) rotate(-45)" text-anchor="end" font-size="8.6" fill="#777" letter-spacing="0">12 PM</text>
<rect x="171.9" y="584.0" width="12" height="16.0" fill="#ffff00" stroke="#333" stroke-width="1"/>
<text transform="translate(180.1,610.8) rotate(-45)" text-anchor="end" font-size="8.6" fill="#777" letter-spacing="0">1 PM</text>
<rect x="194.0" y="587.9" width="12" height="12.1" fill="#00e400" stroke="#333" stroke-width="1"/>
<text transform="translate(202.2,610.8) rotate(-45)" text-anchor="end" font-size="8.6" fill="#777" letter-spacing="0">2 PM</text>
<rect x="216.1" y="590.9" width="12" height="9.1" fill="#00e400" stroke="#333" stroke-width="1"/>
<text transform="translate(224.3,610.8) rotate(-45)" text-anchor="end" font-size="8.6" fill="#777" letter-spacing="0">3 PM</text>
<rect x="238.2" y="593.7" width="12" height="6.3" fill="#00e400" stroke="#333" stroke-width="1"/>
<text transform="translate(246.4,610.8) rotate(-45)" text-anchor="end" font-size="8.6" fill="#777" letter-spacing="0">4 PM</text>
<rect x="260.4" y="595.9" width="12" height="4.1" fill="#00e400" stroke="#333" stroke-width="1"/>
<text transform="translate(268.6,610.8) rotate(-45)" text-anchor="end" font-size="8.6" fill="#777" letter-spacing="0">5 PM</text>
<rect x="282.5" y="594.2" width="12" height="5.8" fill="#00e400" stroke="#333" stroke-width="1"/>
<text transform="translate(290.7,610.8) rotate(-45)" text-anchor="end" font-size="8.6" fill="#777" letter-spacing="0">6 PM</text>
<rect x="304.6" y="589.3" width="12" height="10.7" fill="#00e400" stroke="#333" stroke-width="1"/>
<text transform="translate(312.8,610.8) rotate(-45)" text-anchor="end" font-size="8.6" fill="#777" letter-spacing="0">7 PM</text>
<rect x="326.7" y="583.2" width="12" height="16.8" fill="#ffff00" stroke="#333" stroke-width="1"/>
<text transform="translate(334.9,610.8) rotate(-45)" text-anchor="end" font-size="8.6" fill="#777" letter-spacing="0">8 PM</text>
<rect x="348.8" y="572.8" width="12" height="27.2" fill="#ffff00" stroke="#333" stroke-width="1"/>
<text transform="translate(357.0,610.8) rotate(-45)" text-anchor="end" font-size="8.6" fill="#777" letter-spacing="0">9 PM</text>
<rect x="371.0" y="560.1" width="12" height="39.9" fill="#ff7e00" stroke="#333" stroke-width="1"/>
<text transform="translate(379.2,610.8) rotate(-45)" text-anchor="end" font-size="8.6" fill="#777" letter-spacing="0">10 PM</text>
<rect x="393.1" y="561.0" width="12" height="39.1" fill="#ff7e00" stroke="#333" stroke-width="1"/>
<text transform="translate(401.3,610.8) rotate(-45)" text-anchor="end" font-size="8.6" fill="#777" letter-spacing="0">11 PM</text>
<rect x="415.2" y="568.4" width="12" height="31.6" fill="#ff7e00" stroke="#333" stroke-width="1"/>
<text transform="translate(423.4,610.8) rotate(-45)" text-anchor="end" font-size="8.6" fill="#777" letter-spacing="0">19 Mar 2021 12 AM</text>
<rect x="437.3" y="578.0" width="12" height="22.0" fill="#ffff00" stroke="#333" stroke-width="1"/>
<text transform="translate(445.5,610.8) rotate(-45)" text-anchor="end" font-size="8.6" fill="#777" letter-spacing="0">1 AM</text>
<rect x="459.4" y="582.4" width="12" height="17.6" fill="#ffff00" stroke="#333" stroke-width="1"/>
<text transform="translate(467.6,610.8) rotate(-45)" text-anchor="end" font-size="8.6" fill="#777" letter-spacing="0">2 AM</text>
<rect x="481.6" y="585.4" width="12" height="14.6" fill="#ffff00" stroke="#333" stroke-width="1"/>
<text transform="translate(489.8,610.8) rotate(-45)" text-anchor="end" font-size="8.6" fill="#777" letter-spacing="0">3 AM</text>
<rect x="503.7" y="590.1" width="12" height="9.9" fill="#00e400" stroke="#333" stroke-width="1"/>
<text transform="translate(511.9,610.8) rotate(-45)" text-anchor="end" font-size="8.6" fill="#777" letter-spacing="0">4 AM</text>
<rect x="525.8" y="592.3" width="12" height="7.7" fill="#00e400" stroke="#333" stroke-width="1"/>
<text transform="translate(534.0,610.8) rotate(-45)" text-anchor="end" font-size="8.6" fill="#777" letter-spacing="0">5 AM</text>
<rect x="547.9" y="594.0" width="12" height="6.1" fill="#00e400" stroke="#333" stroke-width="1"/>
<text transform="translate(556.1,610.8) rotate(-45)" text-anchor="end" font-size="8.6" fill="#777" letter-spacing="0">6 AM</text>
<rect x="570.0" y="595.9" width="12" height="4.1" fill="#00e400" stroke="#333" stroke-width="1"/>
<text transform="translate(578.2,610.8) rotate(-45)" text-anchor="end" font-size="8.6" fill="#777" letter-spacing="0">7 AM</text>
<rect x="592.2" y="598.1" width="12" height="1.9" fill="#00e400" stroke="#333" stroke-width="1"/>
<text transform="translate(600.4,610.8) rotate(-45)" text-anchor="end" font-size="8.6" fill="#777" letter-spacing="0">8 AM</text>
<line x1="77.5" y1="600.5" x2="610.0" y2="600.5" stroke="#ccd6eb" stroke-width="1"/>
<line x1="78.3" y1="600" x2="78.3" y2="606.5" stroke="#ccd6eb" stroke-width="1"/>
<line x1="100.5" y1="600" x2="100.5" y2="606.5" stroke="#ccd6eb" stroke-width="1"/>
<line x1="122.6" y1="600" x2="122.6" y2="606.5" stroke="#ccd6eb" stroke-width="1"/>
<line x1="144.7" y1="600" x2="144.7" y2="606.5" stroke="#ccd6eb" stroke-width="1"/>
<line x1="166.8" y1="600" x2="166.8" y2="606.5" stroke="#ccd6eb" stroke-width="1"/>
<line x1="188.9" y1="600" x2="188.9" y2="606.5" stroke="#ccd6eb" stroke-width="1"/>
<line x1="211.1" y1="600" x2="211.1" y2="606.5" stroke="#ccd6eb" stroke-width="1"/>
<line x1="233.2" y1="600" x2="233.2" y2="606.5" stroke="#ccd6eb" stroke-width="1"/>
<line x1="255.3" y1="600" x2="255.3" y2="606.5" stroke="#ccd6eb" stroke-width="1"/>
<line x1="277.4" y1="600" x2="277.4" y2="606.5" stroke="#ccd6eb" stroke-width="1"/>
<line x1="299.5" y1="600" x2="299.5" y2="606.5" stroke="#ccd6eb" stroke-width="1"/>
<line x1="321.7" y1="600" x2="321.7" y2="606.5" stroke="#ccd6eb" stroke-width="1"/>
<line x1="343.8" y1="600" x2="343.8" y2="606.5" stroke="#ccd6eb" stroke-width="1"/>
<line x1="365.9" y1="600" x2="365.9" y2="606.5" stroke="#ccd6eb" stroke-width="1"/>
<line x1="388.0" y1="600" x2="388.0" y2="606.5" stroke="#ccd6eb" stroke-width="1"/>
<line x1="410.1" y1="600" x2="410.1" y2="606.5" stroke="#ccd6eb" stroke-width="1"/>
<line x1="432.3" y1="600" x2="432.3" y2="606.5" stroke="#ccd6eb" stroke-width="1"/>
<line x1="454.4" y1="600" x2="454.4" y2="606.5" stroke="#ccd6eb" stroke-width="1"/>
<line x1="476.5" y1="600" x2="476.5" y2="606.5" stroke="#ccd6eb" stroke-width="1"/>
<line x1="498.6" y1="600" x2="498.6" y2="606.5" stroke="#ccd6eb" stroke-width="1"/>
<line x1="520.7" y1="600" x2="520.7" y2="606.5" stroke="#ccd6eb" stroke-width="1"/>
<line x1="542.9" y1="600" x2="542.9" y2="606.5" stroke="#ccd6eb" stroke-width="1"/>
<line x1="565.0" y1="600" x2="565.0" y2="606.5" stroke="#ccd6eb" stroke-width="1"/>
<line x1="587.1" y1="600" x2="587.1" y2="606.5" stroke="#ccd6eb" stroke-width="1"/>
<line x1="609.2" y1="600" x2="609.2" y2="606.5" stroke="#ccd6eb" stroke-width="1"/>
</svg></div>

<div id="cc" class="abs">
<div id="cch"><div style="font-size:11px;padding-top:5px;line-height:13px">Current Conditions</div><div style="font-size:9.1px;padding-top:5px;line-height:11px">observed at</div><div style="font-size:11.35px;padding-top:3px;line-height:13px">Mar 19, 2021 8:00 AM (LT)</div></div>
<div id="ccg">7 AQI<br>Good<br>PM2.5</div>
<div id="cchm">Health Message</div>
<div id="ccb">The AQI value for your community is<br>between 0 and 50. Air quality is satisfactory<br>and poses little or no health risk.</div>
</div>
</body></html>
